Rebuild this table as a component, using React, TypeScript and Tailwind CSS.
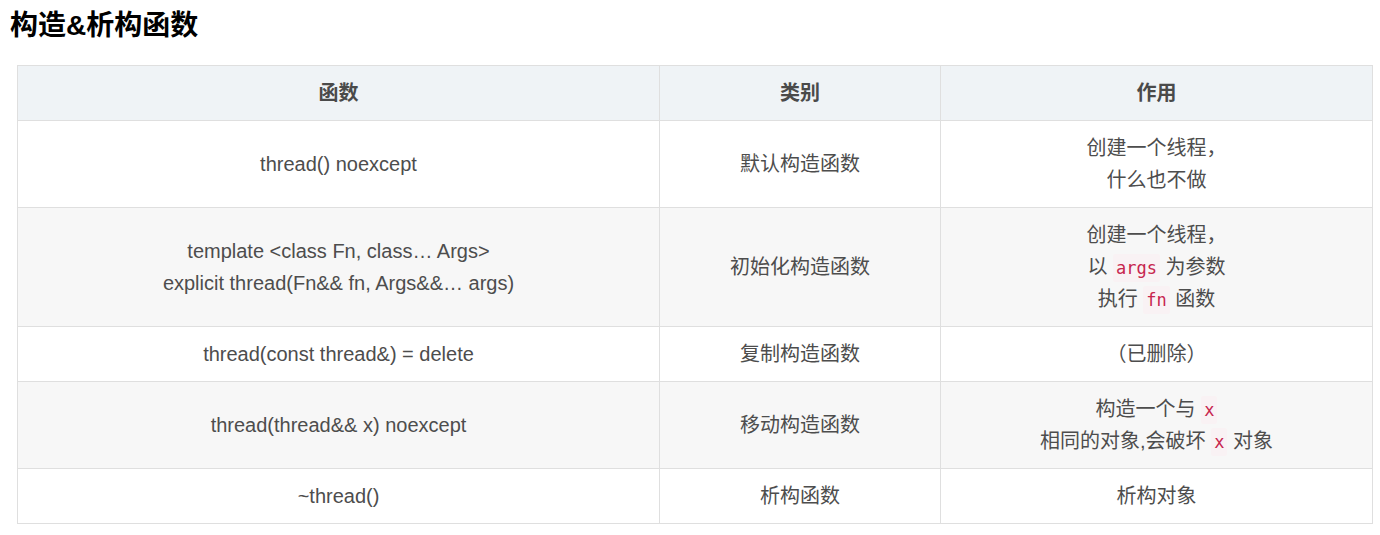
const rows = [
  {
    fn: ["thread() noexcept"],
    kind: "默认构造函数",
    use: [["创建一个线程，"], ["什么也不做"]],
  },
  {
    fn: ["template <class Fn, class… Args>", "explicit thread(Fn&& fn, Args&&… args)"],
    kind: "初始化构造函数",
    use: [["创建一个线程，"], ["以 ", { code: "args" }, " 为参数"], ["执行 ", { code: "fn" }, " 函数"]],
  },
  {
    fn: ["thread(const thread&) = delete"],
    kind: "复制构造函数",
    use: [["（已删除）"]],
  },
  {
    fn: ["thread(thread&& x) noexcept"],
    kind: "移动构造函数",
    use: [["构造一个与 ", { code: "x" }], ["相同的对象,会破坏 ", { code: "x" }, " 对象"]],
  },
  {
    fn: ["~thread()"],
    kind: "析构函数",
    use: [["析构对象"]],
  },
]

type Piece = string | { code: string }

function Code({ children }: { children: string }) {
  return (
    <code className="rounded-[2px] bg-[#f9f2f4] px-[3px] py-[4px] font-['DejaVu_Sans_Mono',monospace] text-[17px] leading-none text-[#c7254e]">
      {children}
    </code>
  )
}

export default function App() {
  return (
    <div className="min-h-screen bg-white pl-[10px] pt-[8px] font-['Liberation_Sans','Noto_Sans_CJK_SC',sans-serif]">
      <h1 className="mb-[21px] text-[28px] font-bold leading-[36px] text-black">构造&amp;析构函数</h1>
      <table className="ml-[7px] w-[1356px] table-fixed border-collapse text-center text-[20px] leading-[32px] text-[#4d4d4d]">
        <colgroup>
          <col className="w-[642px]" />
          <col className="w-[281px]" />
          <col />
        </colgroup>
        <thead>
          <tr className="bg-[#eff3f6]">
            {["函数", "类别", "作用"].map((h) => (
              <th key={h} className="border border-[#dfdfdf] py-[11px] font-bold text-[#4a4a4a]">
                {h}
              </th>
            ))}
          </tr>
        </thead>
        <tbody>
          {rows.map((r, i) => (
            <tr key={i} className={i % 2 === 1 ? "bg-[#f7f7f7]" : "bg-white"}>
              <td className="border border-[#dfdfdf] py-[11px]">
                {r.fn.map((l) => (
                  <div key={l}>{l}</div>
                ))}
              </td>
              <td className="border border-[#dfdfdf] py-[11px]">{r.kind}</td>
              <td className="border border-[#dfdfdf] py-[11px]">
                {r.use.map((line, j) => (
                  <div key={j}>
                    {(line as Piece[]).map((p, k) =>
                      typeof p === "string" ? <span key={k}>{p}</span> : <Code key={k}>{p.code}</Code>
                    )}
                  </div>
                ))}
              </td>
            </tr>
          ))}
        </tbody>
      </table>
    </div>
  )
}
